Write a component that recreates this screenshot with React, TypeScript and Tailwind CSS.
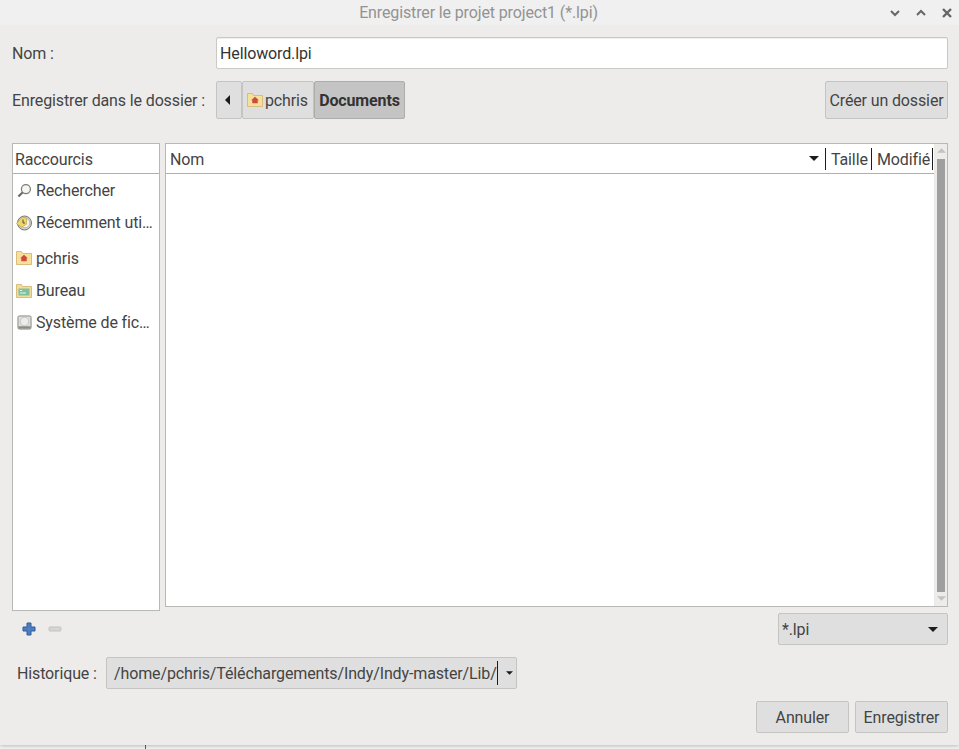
import React from "react";

const font = { fontFamily: "Roboto, sans-serif" };

function Arrow({ dir = "down", cls = "" }: { dir?: "down" | "left" | "up"; cls?: string }) {
  const pts = dir === "down" ? "0,0 10,0 5,5" : dir === "up" ? "0,5 10,5 5,0" : "5,0 5,10 0,5";
  const box = dir === "left" ? "0 0 5 10" : "0 0 10 5";
  return (
    <svg viewBox={box} className={cls}>
      <polygon points={pts} fill="currentColor" />
    </svg>
  );
}

function HomeFolder({ cls = "" }: { cls?: string }) {
  return (
    <svg viewBox="0 0 16 14" className={cls}>
      <path d="M0.5 0.5h5l1 2h9v11h-15z" fill="#f7e19a" stroke="#d9bd7e" />
      <path d="M8 3.8l3.8 3.5h-1.1v3h-5.4v-3h-1.1z" fill="#cc4a3f" />
    </svg>
  );
}

function DesktopFolder({ cls = "" }: { cls?: string }) {
  return (
    <svg viewBox="0 0 16 14" className={cls}>
      <path d="M0.5 0.5h5l1 2h9v11h-15z" fill="#f3dc98" stroke="#d9bd7e" />
      <rect x="2.5" y="4.5" width="11" height="7" fill="#7fc0a0" />
      <rect x="4" y="6" width="2" height="1" fill="#e8f5ee" />
      <rect x="4" y="8.5" width="6" height="1" fill="#e8f5ee" />
    </svg>
  );
}

function SearchIcon({ cls = "" }: { cls?: string }) {
  return (
    <svg viewBox="0 0 16 16" className={cls}>
      <circle cx="9.5" cy="6.5" r="4.8" fill="#f6f6f4" stroke="#7d7d76" strokeWidth="1.3" />
      <path d="M6 10l-4.5 4.5" stroke="#66665f" strokeWidth="2.2" />
    </svg>
  );
}

function RecentIcon({ cls = "" }: { cls?: string }) {
  return (
    <svg viewBox="0 0 16 16" className={cls}>
      <circle cx="8.5" cy="8" r="7" fill="#d2d2ce" stroke="#77776f" />
      <circle cx="9" cy="8" r="4.8" fill="#f2f2ef" stroke="#a8a8a2" strokeWidth="0.7" />
      <path d="M0.3 8.5L6.5 2l4 1.2v6l-5 3z" fill="#f1d769" stroke="#b79a33" strokeWidth="0.6" />
      <path d="M7 4.5v3.5h2" stroke="#4b4b42" strokeWidth="1" fill="none" />
    </svg>
  );
}

function DriveIcon({ cls = "" }: { cls?: string }) {
  return (
    <svg viewBox="0 0 16 16" className={cls}>
      <rect x="1" y="1" width="14" height="14" rx="1.5" fill="#dededb" stroke="#85857f" />
      <circle cx="8" cy="7" r="4.5" fill="#ececea" stroke="#b8b8b4" strokeWidth="0.7" />
      <rect x="1.5" y="12" width="13" height="2.5" fill="#8d8d88" />
    </svg>
  );
}

function Shortcut({ icon, label, cls }: { icon: React.ReactNode; label: string; cls: string }) {
  return (
    <div className={`flex items-center pl-[3px] ${cls}`}>
      <span className="flex w-[16px] h-[16px] shrink-0 items-center justify-center">{icon}</span>
      <span className="ml-[4px] whitespace-nowrap">{label}</span>
    </div>
  );
}

const btn = "border border-[#c4c4c1] rounded-[2px] bg-[#dfdfdf]";

export default function App() {
  return (
    <div style={font} className="relative w-[959px] h-[749px] overflow-hidden bg-[#f5f5f5] text-[16px] tracking-[-0.13px] leading-[21px] text-[#444444]">
      <div className="h-[745px] bg-[#edecea] shadow-[0_1px_4px_rgba(0,0,0,0.25)] flex flex-col">
        <header className="h-[25px] shrink-0 bg-[#f0f0f0] flex items-center text-[#939393] relative">
          <div className="w-full text-center pr-[2px]">Enregistrer le projet project1 (*.lpi)</div>
          <div className="absolute right-0 top-0 h-[25px] flex items-center text-[#666666]">
            <svg viewBox="0 0 12 12" className="w-[12px] h-[12px] mr-[14px]"><path d="M2 4l4 4 4-4" fill="none" stroke="currentColor" strokeWidth="2" /></svg>
            <svg viewBox="0 0 12 12" className="w-[12px] h-[12px] mr-[14px]"><path d="M2 8l4-4 4 4" fill="none" stroke="currentColor" strokeWidth="2" /></svg>
            <svg viewBox="0 0 12 12" className="w-[12px] h-[12px] mr-[6px]"><path d="M2 2l8 8M10 2l-8 8" fill="none" stroke="currentColor" strokeWidth="2.4" /></svg>
          </div>
        </header>

        <div className="flex-1 flex flex-col pt-[12px] pl-[12px] pr-[11px]">
          <div className="flex items-center h-[32px]">
            <div className="w-[204px] shrink-0">Nom :</div>
            <div className="flex-1 h-[32px] border border-[#c9c9c6] rounded-[2px] bg-white px-[3px] flex items-center text-[#333333] shadow-[inset_0_1px_0_#eeeeee]">Helloword.lpi</div>
          </div>

          <div className="flex items-center h-[38px] mt-[12px]">
            <div className="w-[204px] shrink-0 whitespace-nowrap">Enregistrer dans le dossier :</div>
            <div className="flex h-[38px]">
              <div className={`${btn} w-[26px] flex items-center justify-center pr-[3px] text-[#1a1a1a]`}><Arrow dir="left" cls="w-[5px] h-[10px]" /></div>
              <div className={`${btn} w-[72px] flex items-center pl-[4px]`}>
                <HomeFolder cls="w-[16px] h-[14px] shrink-0" />
                <span className="ml-[2px]">pchris</span>
              </div>
              <div className="border border-[#adadaa] rounded-[2px] bg-[#c4c4c4] w-[91px] flex items-center justify-center font-bold text-[#333333]">Documents</div>
            </div>
            <div className={`${btn} ml-auto w-[123px] h-[38px] flex items-center justify-center`}>Créer un dossier</div>
          </div>

          <div className="flex mt-[24px] gap-[5px]">
            <div className="w-[148px] shrink-0 flex flex-col">
              <div className="h-[468px] bg-white border border-[#b8b8b5] flex flex-col">
                <div className="h-[30px] shrink-0 border-b border-[#b0b0ad] pl-[2px] pt-[1px] flex items-center">Raccourcis</div>
                <Shortcut cls="h-[32px]" icon={<SearchIcon cls="w-[15px] h-[15px]" />} label="Rechercher" />
                <Shortcut cls="h-[33px]" icon={<RecentIcon cls="w-[16px] h-[16px]" />} label="Récemment uti…" />
                <Shortcut cls="h-[36px] pt-[2px]" icon={<HomeFolder cls="w-[16px] h-[14px]" />} label="pchris" />
                <Shortcut cls="h-[31px]" icon={<DesktopFolder cls="w-[16px] h-[14px]" />} label="Bureau" />
                <Shortcut cls="h-[33px]" icon={<DriveIcon cls="w-[15px] h-[15px]" />} label="Système de fic…" />
              </div>
              <div className="flex items-center gap-[12px] pl-[10px] mt-[10px] h-[16px]">
                <svg viewBox="0 0 14 14" className="w-[14px] h-[14px]">
                  <path d="M5 1h4v4h4v4H9v4H5V9H1V5h4z" fill="#4f7dbd" stroke="#2f5c9e" strokeWidth="1" strokeLinejoin="round" />
                </svg>
                <svg viewBox="0 0 14 14" className="w-[14px] h-[14px]">
                  <rect x="1" y="5" width="12" height="4" rx="1" fill="#d5d5d2" stroke="#c2c2bf" />
                </svg>
              </div>
            </div>

            <div className="flex-1 flex flex-col">
              <div className="h-[464px] bg-white border border-[#b8b8b5] flex">
                <div className="flex-1 flex flex-col min-w-0">
                  <div className="h-[30px] border-b border-[#b0b0ad] flex items-center pr-[1px]">
                    <div className="flex-1 pl-[4px] pt-[1px]">Nom</div>
                    <Arrow dir="down" cls="w-[10px] h-[5px] mr-[6px] text-[#1c1c1c]" />
                    <div className="h-[22px] border-l border-[#1c1c1c] pl-[5px] pt-[1px] w-[46px] flex items-center">Taille</div>
                    <div className="h-[22px] border-x border-[#1c1c1c] pl-[5px] pt-[1px] w-[62px] flex items-center whitespace-nowrap overflow-hidden">Modifié</div>
                  </div>
                  <div className="flex-1" />
                </div>
                <div className="w-[13px] shrink-0 bg-[#edecea] flex flex-col items-center border-l border-[#e8e8e6]">
                  <Arrow dir="up" cls="w-[9px] h-[5px] mt-[4px] text-[#c2c2c0]" />
                  <div className="w-[8px] flex-1 bg-[#9f9f9f] mt-[6px] mb-[4px]" />
                  <Arrow dir="down" cls="w-[9px] h-[5px] mb-[5px] text-[#c2c2c0]" />
                </div>
              </div>
              <div className={`${btn} self-end w-[170px] h-[32px] mt-[6px] flex items-center pl-[3px] pr-[9px]`}>
                <span className="flex-1">*.lpi</span>
                <Arrow dir="down" cls="w-[10px] h-[5px] text-[#1c1c1c]" />
              </div>
            </div>
          </div>

          <div className="flex items-center h-[32px] mt-[12px] pl-[5px]">
            <div className="w-[89px] shrink-0">Historique :</div>
            <div className={`${btn} w-[411px] h-[32px] flex items-center pl-[7px]`}>
              <span className="whitespace-nowrap w-[383px]">/home/pchris/Téléchargements/Indy/Indy-master/Lib/</span>
              <span className="h-[24px] border-l border-[#1c1c1c]" />
              <Arrow dir="down" cls="w-[7px] h-[4px] ml-[8px] text-[#1c1c1c]" />
            </div>
          </div>

          <div className="flex justify-end gap-[6px] mt-[12px]">
            <div className={`${btn} w-[93px] h-[32px] flex items-center justify-center`}>Annuler</div>
            <div className={`${btn} w-[93px] h-[32px] flex items-center justify-center`}>Enregistrer</div>
          </div>
        </div>
      </div>
      <div className="absolute left-[145px] top-[745px] h-[4px] w-px bg-[#555555]" />
    </div>
  );
}
